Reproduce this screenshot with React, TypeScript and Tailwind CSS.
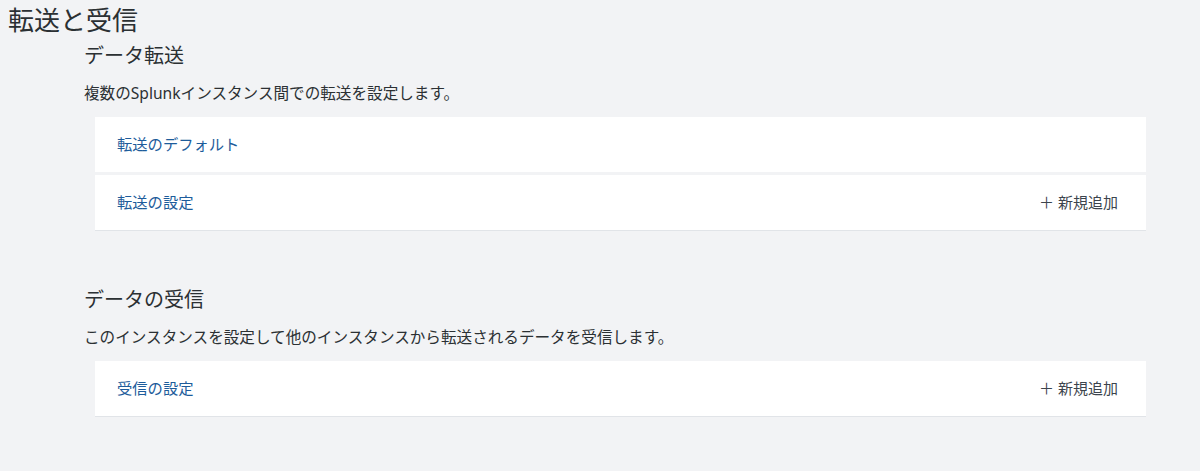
const font = { fontFamily: '"Noto Sans", "Noto Sans CJK JP", sans-serif' };

type Row = { label: string; add?: boolean };

const Section = ({
  title,
  desc,
  rows,
}: {
  title: string;
  desc: string;
  rows: Row[];
}) => {
  return (
    <div className="pl-[84px] pr-[54px]">
      <div className="text-[20px] leading-[28px] text-[#2b3033]">{title}</div>
      <div className="mt-[13px] text-[15.6px] leading-[20px] text-[#2b3033]">{desc}</div>
      <div className="mt-[14px] ml-[11px] flex flex-col gap-[3px] shadow-[0_1px_0_#e1e4e8]">
        {rows.map((r) => (
          <div
            key={r.label}
            className="flex h-[55px] items-center justify-between bg-white pl-[22px] pr-[28px]"
          >
            <a className="text-[15.3px] text-[#1d5c9b]" href="#">
              {r.label}
            </a>
            {r.add && (
              <span className="text-[15px] text-[#3c444d]">＋ 新規追加</span>
            )}
          </div>
        ))}
      </div>
    </div>
  );
};

export default function App() {
  return (
    <div className="h-[471px] w-[1200px] overflow-hidden bg-[#f2f3f5]" style={font}>
      <div className="pl-[8px] pt-[2px] text-[26px] leading-[36px] text-[#2b3033]">
        転送と受信
      </div>
      <div className="mt-[4px]">
        <Section
          title="データ転送"
          desc="複数のSplunkインスタンス間での転送を設定します。"
          rows={[{ label: "転送のデフォルト" }, { label: "転送の設定", add: true }]}
        />
      </div>
      <div className="mt-[56px]">
        <Section
          title="データの受信"
          desc="このインスタンスを設定して他のインスタンスから転送されるデータを受信します。"
          rows={[{ label: "受信の設定", add: true }]}
        />
      </div>
    </div>
  );
}
